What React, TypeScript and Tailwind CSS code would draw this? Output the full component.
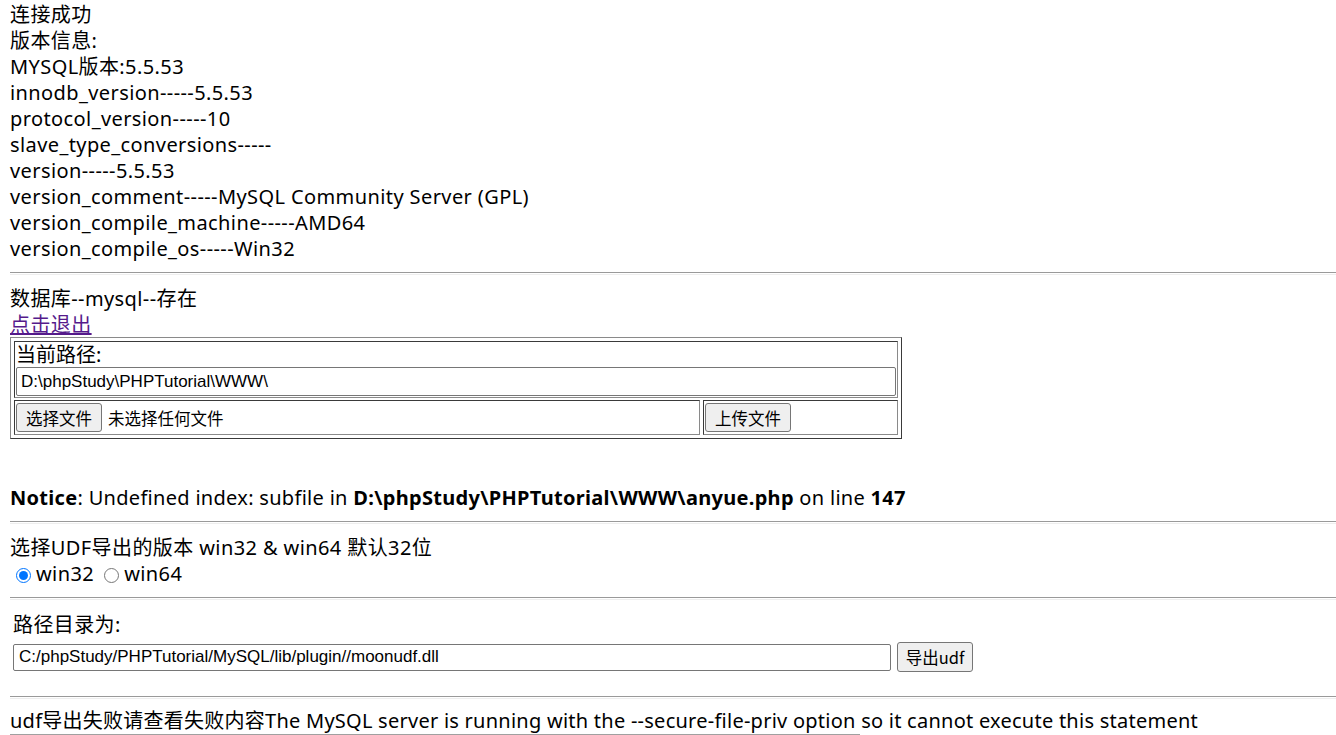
export default function App() {
  const hr = "mr-0 h-[3px] border-t border-b border-t-[#9a9a9a] border-b-[#eeeeee]";
  const btn =
    "h-[29px] px-[7px] bg-[#efefef] border border-[#767676] rounded-[3px] text-[16.5px] leading-[20px] text-black tracking-normal font-['Noto_Sans_CJK_SC',sans-serif]";

  return (
    <div className="min-h-screen bg-white text-black font-['Noto_Sans','Noto_Sans_CJK_SC',sans-serif] text-[20px] leading-[26px] tracking-[0.4px] pl-[10px] pt-[2px] overflow-hidden">
      <div>连接成功</div>
      <div>版本信息:</div>
      <div>MYSQL版本:5.5.53</div>
      <div>innodb_version-----5.5.53</div>
      <div>protocol_version-----10</div>
      <div>slave_type_conversions-----</div>
      <div>version-----5.5.53</div>
      <div>version_comment-----MySQL Community Server (GPL)</div>
      <div>version_compile_machine-----AMD64</div>
      <div>version_compile_os-----Win32</div>

      <div className={`mt-[10px] ${hr}`} />

      <div className="mt-[11px]">数据库--mysql--存在</div>
      <div>
        <a href="#" className="text-[#551a8b] underline">
          点击退出
        </a>
      </div>

      {/* upload table */}
      <div className="-mt-[1px] w-[892px] h-[102px] border border-t-[#8a8a8a] border-l-[#8a8a8a] border-b-[#3a3a3a] border-r-[#3a3a3a] p-[3px] flex flex-col gap-[2px] tracking-normal">
        <div className="h-[57px] border border-t-[#3a3a3a] border-l-[#3a3a3a] border-b-[#8a8a8a] border-r-[#8a8a8a] px-[1px] flex flex-col">
          <div className="h-[25px] leading-[26px]">当前路径:</div>
          <input
            readOnly
            value="D:\phpStudy\PHPTutorial\WWW\"
            className="h-[29px] w-[880px] border border-[#767676] rounded-[2px] px-[4px] text-[17px] font-['Liberation_Sans',Arial,sans-serif] outline-none"
          />
        </div>
        <div className="flex gap-[3px] h-[35px]">
          <div className="w-[686px] border border-t-[#3a3a3a] border-l-[#3a3a3a] border-b-[#8a8a8a] border-r-[#8a8a8a] px-[1px] flex items-center">
            <button className={`${btn} w-[86px]`}>选择文件</button>
            <span className="ml-[6px] text-[16.5px] font-['Noto_Sans_CJK_SC',sans-serif]">未选择任何文件</span>
          </div>
          <div className="w-[195px] border border-t-[#3a3a3a] border-l-[#3a3a3a] border-b-[#8a8a8a] border-r-[#8a8a8a] px-[1px] flex items-center">
            <button className={`${btn} w-[86px]`}>上传文件</button>
          </div>
        </div>
      </div>

      <div className="mt-[46px] tracking-[0.3px]">
        <b>Notice</b>: Undefined index: subfile in <b>D:\phpStudy\PHPTutorial\WWW\anyue.php</b> on line <b>147</b>
      </div>

      <div className={`mt-[10px] ${hr}`} />

      <div className="mt-[11px]">选择UDF导出的版本 win32 &amp; win64 默认32位</div>
      <div className="flex items-center">
        <input type="radio" name="v" defaultChecked className="w-[15px] h-[15px] ml-[6px] mr-[5px] mt-[2px] accent-[#0075ff]" />
        <span>win32</span>
        <input type="radio" name="v" className="w-[15px] h-[15px] ml-[10px] mr-[5px] mt-[2px] accent-[#0075ff]" />
        <span>win64</span>
      </div>

      <div className={`mt-[10px] ${hr}`} />

      <div className="mt-[12px] pl-[3px]">路径目录为:</div>
      <div className="mt-[4px] pl-[3px] flex items-center h-[30px] tracking-normal">
        <input
          readOnly
          value="C:/phpStudy/PHPTutorial/MySQL/lib/plugin//moonudf.dll"
          className="h-[27px] w-[878px] border border-[#767676] rounded-[2px] px-[5px] text-[17px] font-['Liberation_Sans',Arial,sans-serif] outline-none"
        />
        <button className={`${btn} ml-[6px] w-[76px] h-[30px]`}>导出udf</button>
      </div>

      <div className={`mt-[24px] ${hr}`} />

      <div className="mt-[9px] whitespace-nowrap tracking-[0.25px]">
        udf导出失败请查看失败内容The MySQL server is running with the --secure-file-priv option so it cannot execute this statement
      </div>
      <div className="w-[850px] border-t border-[#a0a0a0]" />
    </div>
  );
}
